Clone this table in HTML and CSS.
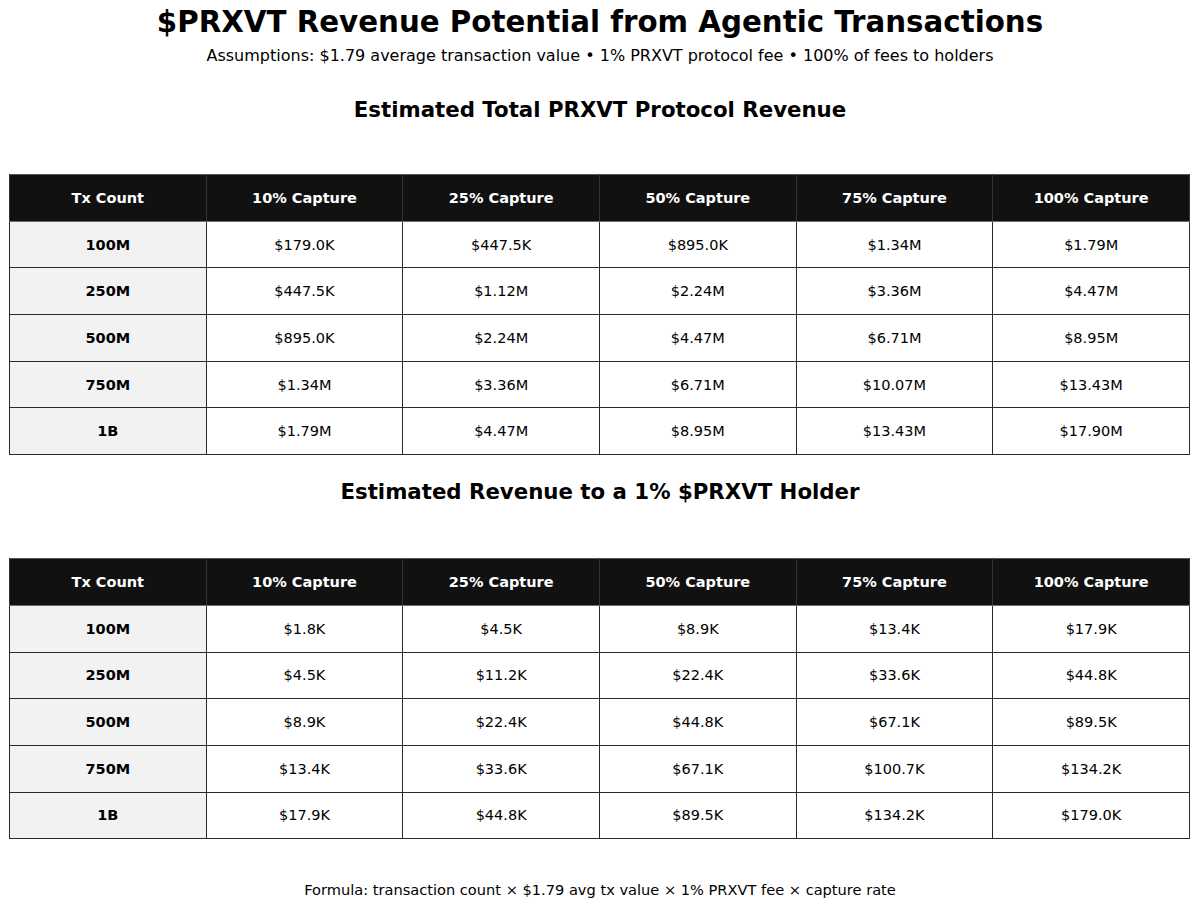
FILE: index.html
```html
<!DOCTYPE html>
<html>
<head>
<meta charset="utf-8">
<link rel="stylesheet" href="styles.css">
</head>
<body>
<div class="page">
  <h1 class="title">$PRXVT Revenue Potential from Agentic Transactions</h1>
  <p class="subtitle">Assumptions: $1.79 average transaction value • 1% PRXVT protocol fee • 100% of fees to holders</p>

  <h2 class="section section-first">Estimated Total PRXVT Protocol Revenue</h2>
  <table class="grid">
    <thead>
      <tr><th>Tx Count</th><th>10% Capture</th><th>25% Capture</th><th>50% Capture</th><th>75% Capture</th><th>100% Capture</th></tr>
    </thead>
    <tbody>
      <tr><td class="lead">100M</td><td>$179.0K</td><td>$447.5K</td><td>$895.0K</td><td>$1.34M</td><td>$1.79M</td></tr>
      <tr><td class="lead">250M</td><td>$447.5K</td><td>$1.12M</td><td>$2.24M</td><td>$3.36M</td><td>$4.47M</td></tr>
      <tr><td class="lead">500M</td><td>$895.0K</td><td>$2.24M</td><td>$4.47M</td><td>$6.71M</td><td>$8.95M</td></tr>
      <tr><td class="lead">750M</td><td>$1.34M</td><td>$3.36M</td><td>$6.71M</td><td>$10.07M</td><td>$13.43M</td></tr>
      <tr><td class="lead">1B</td><td>$1.79M</td><td>$4.47M</td><td>$8.95M</td><td>$13.43M</td><td>$17.90M</td></tr>
    </tbody>
  </table>

  <h2 class="section section-second">Estimated Revenue to a 1% $PRXVT Holder</h2>
  <table class="grid">
    <thead>
      <tr><th>Tx Count</th><th>10% Capture</th><th>25% Capture</th><th>50% Capture</th><th>75% Capture</th><th>100% Capture</th></tr>
    </thead>
    <tbody>
      <tr><td class="lead">100M</td><td>$1.8K</td><td>$4.5K</td><td>$8.9K</td><td>$13.4K</td><td>$17.9K</td></tr>
      <tr><td class="lead">250M</td><td>$4.5K</td><td>$11.2K</td><td>$22.4K</td><td>$33.6K</td><td>$44.8K</td></tr>
      <tr><td class="lead">500M</td><td>$8.9K</td><td>$22.4K</td><td>$44.8K</td><td>$67.1K</td><td>$89.5K</td></tr>
      <tr><td class="lead">750M</td><td>$13.4K</td><td>$33.6K</td><td>$67.1K</td><td>$100.7K</td><td>$134.2K</td></tr>
      <tr><td class="lead">1B</td><td>$17.9K</td><td>$44.8K</td><td>$89.5K</td><td>$134.2K</td><td>$179.0K</td></tr>
    </tbody>
  </table>

  <p class="formula">Formula: transaction count × $1.79 avg tx value × 1% PRXVT fee × capture rate</p>
</div>
</body>
</html>
```

FILE: styles.css
```css
html, body {
  margin: 0;
  padding: 0;
  background: #ffffff;
}

.page {
  width: 1200px;
  height: 908px;
  font-family: "DejaVu Sans", "Liberation Sans", sans-serif;
  color: #000000;
  display: flex;
  flex-direction: column;
  align-items: center;
  padding-top: 4px;
  box-sizing: border-box;
}

.title {
  margin: 0;
  font-size: 29.3px;
  font-weight: bold;
  line-height: 36px;
  text-align: center;
}

.subtitle {
  margin: 5px 0 0 0;
  font-size: 16px;
  line-height: 22px;
  text-align: center;
}

.section {
  margin: 0;
  font-size: 21.3px;
  font-weight: bold;
  line-height: 28px;
  text-align: center;
}

.section-first {
  margin-top: 29px;
  margin-bottom: 50px;
}

.section-second {
  margin-top: 23px;
  margin-bottom: 52px;
}

.grid {
  width: 1181px;
  margin-left: -1px;
  border-collapse: collapse;
  table-layout: fixed;
  border: 1px solid #5a5a5a;
  font-size: 14.5px;
}

.grid th,
.grid td {
  height: 46.7px;
  padding: 0;
  text-align: center;
  vertical-align: middle;
  box-sizing: border-box;
}

.grid th {
  background: #111111;
  color: #ffffff;
  font-weight: bold;
  border-left: 1px solid #333333;
  border-right: 1px solid #333333;
  border-bottom: 1px solid #6a6a6a;
}

.grid td {
  background: #ffffff;
  border: 1px solid #2a2a2a;
}

.grid td.lead {
  background: #f2f2f2;
  font-weight: bold;
}

.formula {
  margin: 41px 0 0 0;
  font-size: 14.6px;
  line-height: 20px;
  text-align: center;
}
```
